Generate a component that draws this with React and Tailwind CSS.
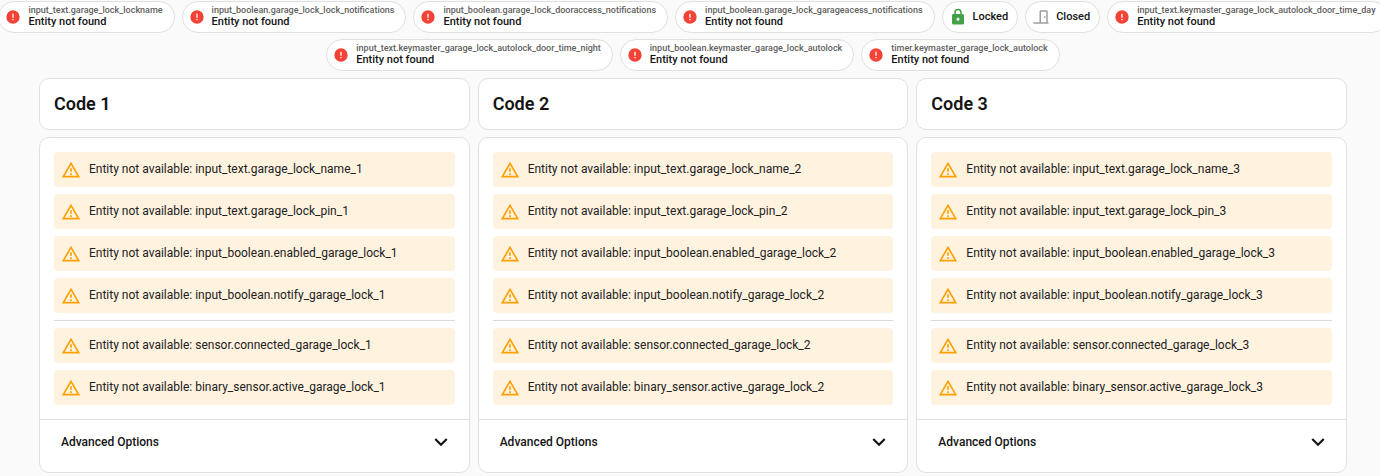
const ICONS = {
  alertCircle:
    'M13,13H11V7H13M13,17H11V15H13M12,2A10,10 0 0,0 2,12A10,10 0 0,0 12,22A10,10 0 0,0 22,12A10,10 0 0,0 12,2Z',
  alert: 'M12,2L1,21H23M12,6L19.53,19H4.47M11,10V14H13V10M11,16V18H13V16',
  lock: 'M12,17A2,2 0 0,0 14,15C14,13.89 13.1,13 12,13A2,2 0 0,0 10,15A2,2 0 0,0 12,17M18,8A2,2 0 0,1 20,10V20A2,2 0 0,1 18,22H6A2,2 0 0,1 4,20V10C4,8.89 4.9,8 6,8H7V6A5,5 0 0,1 12,1A5,5 0 0,1 17,6V8H18M12,3A3,3 0 0,0 9,6V8H15V6A3,3 0 0,0 12,3Z',
  door: 'M16,11H18V13H16V11M12,3H19C20.11,3 21,3.89 21,5V19H22V21H2V19H10V5C10,3.89 10.89,3 12,3M12,5V19H19V5H12Z',
  chevron: 'M7.41,8.58L12,13.17L16.59,8.58L18,10L12,16L6,10L7.41,8.58Z',
};

function Icon({ name, className }) {
  return (
    <svg viewBox="0 0 24 24" fill="currentColor" aria-hidden="true" className={`shrink-0 ${className}`}>
      <path d={ICONS[name]} />
    </svg>
  );
}

const BADGE_ROWS = [
  [
    { label: 'input_text.garage_lock_lockname' },
    { label: 'input_boolean.garage_lock_lock_notifications' },
    { label: 'input_boolean.garage_lock_dooraccess_notifications' },
    { label: 'input_boolean.garage_lock_garageacess_notifications' },
    { state: 'Locked', icon: 'lock', tone: 'text-[#43a047]' },
    { state: 'Closed', icon: 'door', tone: 'text-[#9e9e9e]' },
    { label: 'input_text.keymaster_garage_lock_autolock_door_time_day' },
  ],
  [
    { label: 'input_text.keymaster_garage_lock_autolock_door_time_night' },
    { label: 'input_boolean.keymaster_garage_lock_autolock' },
    { label: 'timer.keymaster_garage_lock_autolock' },
  ],
];

function Badge({ label, state = 'Entity not found', icon = 'alertCircle', tone = 'text-[#f44336]' }) {
  return (
    <button
      type="button"
      className={`flex h-8 shrink-0 items-center rounded-full border border-[#e0e0e0] bg-white pl-1.5 text-left font-medium whitespace-nowrap ${label ? 'gap-[7px] pr-[11px]' : 'gap-1.5 pr-[9px]'}`}
    >
      <Icon name={icon} className={`${label ? 'size-4' : 'size-[18px]'} ${tone}`} />
      <span className="flex flex-col">
        {label && <span className="text-[9px] leading-[9px] text-[#5f5f5f]">{label}</span>}
        <span className="text-[11px] leading-[14px] text-[#141414]">{state}</span>
      </span>
    </button>
  );
}

function Warning({ entity }) {
  return (
    <p className="flex h-[35px] items-center gap-2 rounded-[4px] bg-[#fff3e0] px-[7px] text-[12px] text-[#212121]">
      <Icon name="alert" className="size-5 text-[#ffa000]" />
      <span className="pb-0.5">Entity not available: {entity}</span>
    </p>
  );
}

function CodeColumn({ slot }) {
  return (
    <section className="flex min-w-0 flex-col gap-[7px]">
      <div className="flex h-[52px] items-center rounded-[10px] border border-[#e0e0e0] bg-white px-3.5">
        <h2 className="pb-0.5 text-[18px] font-semibold text-[#141414]">Code {slot}</h2>
      </div>
      <div className="rounded-[10px] border border-[#e0e0e0] bg-white">
        <div className="flex flex-col gap-[7px] p-3.5">
          <Warning entity={`input_text.garage_lock_name_${slot}`} />
          <Warning entity={`input_text.garage_lock_pin_${slot}`} />
          <Warning entity={`input_boolean.enabled_garage_lock_${slot}`} />
          <Warning entity={`input_boolean.notify_garage_lock_${slot}`} />
          <hr className="border-[#dadada]" />
          <Warning entity={`sensor.connected_garage_lock_${slot}`} />
          <Warning entity={`binary_sensor.active_garage_lock_${slot}`} />
        </div>
        <button
          type="button"
          className="flex h-[53px] w-full items-center justify-between border-t border-[#e0e0e0] pr-[15px] pb-2 pl-[21px] text-[12px] font-medium text-[#141414]"
        >
          Advanced Options
          <Icon name="chevron" className="size-[26px]" />
        </button>
      </div>
    </section>
  );
}

export default function App() {
  return (
    <div className="min-h-screen overflow-x-hidden bg-[#fafafa] font-[Roboto,sans-serif]">
      <main className="-mr-1.5 pt-px">
        <div className="flex flex-col gap-1.5">
          {BADGE_ROWS.map((row, i) => (
            <div key={i} className="flex justify-center gap-[7px]">
              {row.map((badge) => (
                <Badge key={badge.label ?? badge.state} {...badge} />
              ))}
            </div>
          ))}
        </div>
        <div className="grid grid-cols-3 gap-2 px-[39px] pt-[7px]">
          {[1, 2, 3].map((slot) => (
            <CodeColumn key={slot} slot={slot} />
          ))}
        </div>
      </main>
    </div>
  );
}
